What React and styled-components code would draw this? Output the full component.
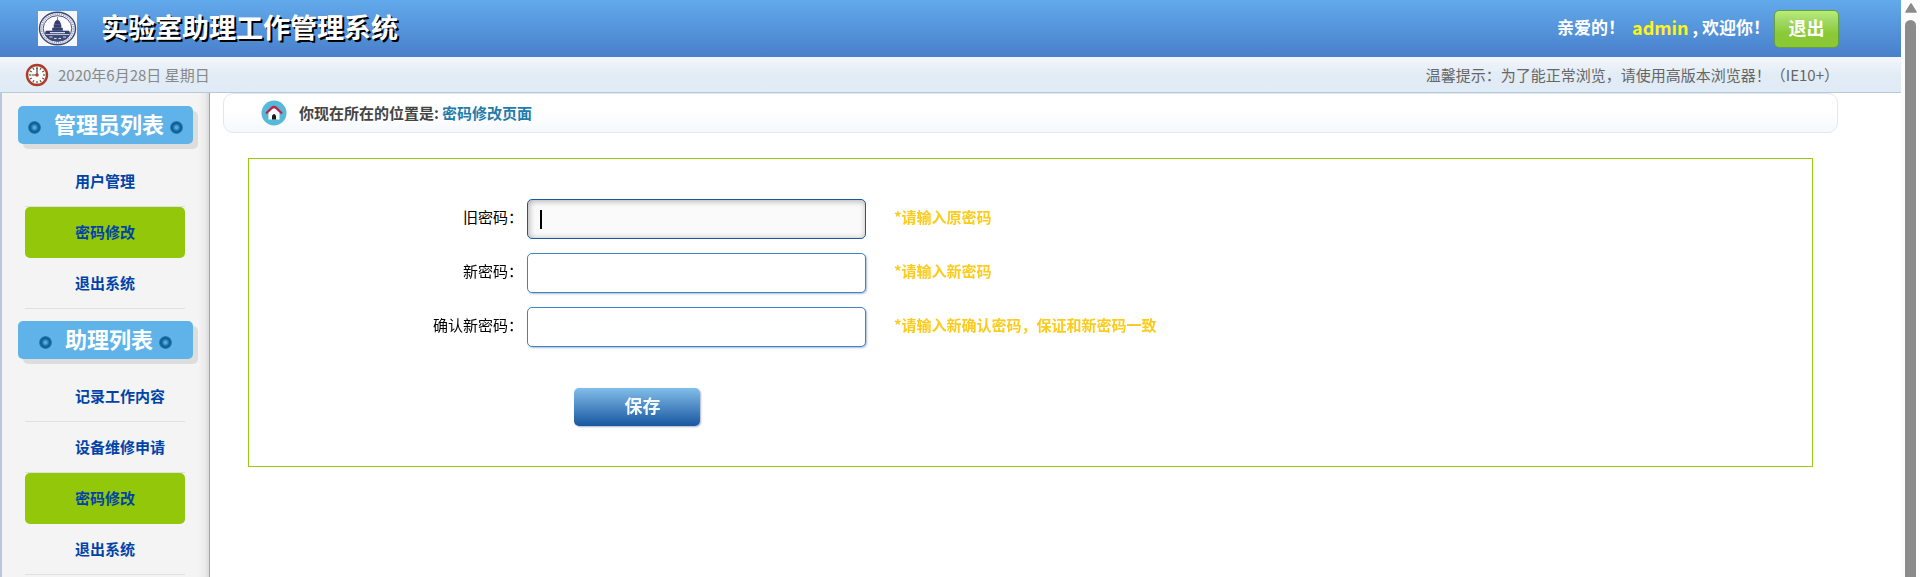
import React from 'react';
import styled, { createGlobalStyle, css } from 'styled-components';

const GlobalStyle = createGlobalStyle`
  *, *::before, *::after { box-sizing: border-box; }
  html, body, #root { height: 100%; }
  body {
    margin: 0;
    overflow: hidden;
    background: #fff;
    color: #000;
    font: 15px/22px "Noto Sans CJK SC", sans-serif;
  }
  h1, h2, ul, p { margin: 0; padding: 0; }
  ul { list-style: none; }
  a { text-decoration: none; }
  button, input { font-family: inherit; }
`;

const Shell = styled.div`
  display: flex;
  height: 100%;
`;

const Page = styled.div`
  flex: 1;
  min-width: 0;
  display: flex;
  flex-direction: column;
`;

const ScrollTrack = styled.div`
  width: 19px;
  padding: 3px 4px 0;
  background: #fcfcfc;
  display: flex;
  flex-direction: column;
  gap: 7px;
`;

const ScrollArrow = styled.svg`
  display: block;
  flex: none;
  width: 12px;
  height: 10px;
`;

const ScrollThumb = styled.div`
  flex: 1;
  width: 11px;
  background: #8b8b8b;
  border-radius: 6px 6px 0 0;
`;

const Header = styled.header`
  flex: none;
  height: 57px;
  padding: 0 62px 0 38px;
  display: flex;
  align-items: center;
  background: linear-gradient(#62aaeb, #487fca);
`;

const Logo = styled.svg`
  display: block;
  width: 39px;
  height: 35px;
`;

const SiteTitle = styled.h1`
  flex: 1;
  margin-left: 24px;
  padding-bottom: 4px;
  font-size: 27px;
  line-height: 52px;
  color: #fff;
  text-shadow: 2px 2px 0 #000;
`;

const Welcome = styled.p`
  display: flex;
  align-items: center;
  margin-right: 4px;
  padding-bottom: 3px;
  color: #fff;
  font-size: 17px;
  font-weight: bold;
`;

const UserName = styled.span`
  margin: 0 4px 0 7px;
  color: #fff31c;
  font-size: 18px;
`;

const ExitButton = styled.button`
  width: 65px;
  height: 38px;
  padding: 0 0 3px;
  border: 1px solid #62a043;
  border-radius: 5px;
  background: linear-gradient(#b8ee76, #a3da68 25%, #8ac835 65%, #8ac835);
  color: #fff;
  font-size: 18px;
  font-weight: bold;
`;

const InfoBar = styled.div`
  flex: none;
  height: 36px;
  padding: 0 62px 0 25px;
  display: flex;
  align-items: center;
  border-bottom: 1px solid #b9c9da;
  background: linear-gradient(#f4f6fd, #e2ecf5 50%, #dfebf5);
`;

const Clock = styled.svg`
  display: block;
  width: 24px;
  height: 24px;
`;

const Today = styled.time`
  flex: 1;
  margin-left: 9px;
  color: #888;
`;

const Tip = styled.p`
  color: #666;
`;

const Body = styled.div`
  flex: 1;
  min-height: 0;
  display: flex;
`;

const Sidebar = styled.nav`
  width: 210px;
  flex: none;
  overflow: hidden;
  padding: 13px 0 0;
  border-left: 2px solid #bac6dd;
  border-right: 1px solid #8fa9cc;
  background: linear-gradient(to left, #d9d9d9, #ebebeb 4px, #f4f4f4 11px);
`;

const GroupTitle = styled.h2`
  width: 175px;
  height: 38px;
  margin: 0 0 12px 16px;
  display: flex;
  align-items: center;
  justify-content: center;
  border-radius: 5px;
  background: #60b3e8;
  box-shadow: 5px 5px 0 #ddd;
  color: #fff;
  font-size: 22px;
  line-height: 34px;
  padding-bottom: 4px;
`;

const Ring = styled.span`
  width: 13px;
  height: 13px;
  margin: ${({ $end }) => ($end ? '8px 0 0 6px' : '8px 13px 0 0')};
  border-radius: 50%;
  background: radial-gradient(circle, #57ace0 0 1px, #0e6199 4px, #0e6199 5px, #3d8dc2 7px);
`;

const Menu = styled.ul`
  width: 160px;
  margin: 0 0 12px 23px;
`;

const MenuLink = styled.a`
  display: block;
  height: 51px;
  padding-left: 50px;
  border-bottom: 1px solid #e0e0e0;
  color: #0043a8;
  font-weight: bold;
  line-height: 50px;
  ${({ $active }) =>
    $active &&
    css`
      border-bottom-color: transparent;
      border-radius: 5px;
      background: #92c70a;
    `}
`;

const Main = styled.main`
  flex: 1;
  min-width: 0;
  padding: 0 63px 0 13px;
`;

const Location = styled.div`
  height: 40px;
  padding-left: 37px;
  display: flex;
  align-items: center;
  border: 1px solid #e3e6f6;
  border-radius: 10px;
  background: linear-gradient(#fff 40%, #f5f9fd);
  color: #444;
  font-weight: bold;
`;

const HomeIcon = styled.svg`
  display: block;
  width: 26px;
  height: 26px;
  margin-right: 12px;
`;

const LocationLink = styled.a`
  margin-left: 3px;
  color: #237ba9;
`;

const Panel = styled.form`
  margin: 25px 25px 0;
  padding: 40px 0 40px 83px;
  border: 1px solid #98c913;
`;

const Field = styled.div`
  display: flex;
  align-items: center;
  margin-bottom: 14px;
`;

const FieldLabel = styled.label`
  width: 195px;
  padding: 0 4px 4px 0;
  text-align: right;
`;

const FieldInput = styled.input`
  width: 339px;
  height: 40px;
  padding: 0 12px;
  border: 1px solid #4183c4;
  border-radius: 5px;
  outline: none;
  background: #fff;
  box-shadow: 1px 1px 2px #a9bdd4;
  font-size: 15px;

  &:focus {
    border-color: #1a57a5;
    background: linear-gradient(#000, #000) 12px 50% / 2px 19px no-repeat #fafafa;
    box-shadow: inset 1px 1px 6px #aaa;
    caret-color: transparent;
  }
`;

const Hint = styled.span`
  margin-left: 28px;
  padding-bottom: 4px;
  color: #fccb1c;
  font-weight: bold;
`;

const SaveButton = styled.button`
  display: block;
  width: 126px;
  height: 38px;
  margin: 41px 0 0 242px;
  padding: 0 0 5px 11px;
  border: 0;
  border-radius: 5px;
  background: linear-gradient(#82bee9, #1856a0);
  box-shadow: 1px 1px 2px #a9b4cc;
  color: #f2f9ff;
  font-size: 18px;
  font-weight: bold;
`;

const groups = [
  {
    title: '管理员列表',
    items: [{ text: '用户管理' }, { text: '密码修改', active: true }, { text: '退出系统' }],
  },
  {
    title: '助理列表',
    items: [
      { text: '记录工作内容' },
      { text: '设备维修申请' },
      { text: '密码修改', active: true },
      { text: '退出系统' },
    ],
  },
];

const fields = [
  { id: 'old-password', label: '旧密码：', hint: '*请输入原密码' },
  { id: 'new-password', label: '新密码：', hint: '*请输入新密码' },
  { id: 'confirm-password', label: '确认新密码：', hint: '*请输入新确认密码，保证和新密码一致' },
];

const ticks = Array.from({ length: 12 }, (_, i) => i * 30);

export default function App() {
  return (
    <>
      <GlobalStyle />
      <Shell>
        <Page>
          <Header>
            <Logo viewBox="0 0 39 35" aria-hidden="true">
              <rect width="39" height="35" fill="#f6f7fa" />
              <ellipse cx="19.5" cy="17.5" rx="18" ry="16.3" fill="none" stroke="#3c4774" strokeWidth="1.4" />
              <ellipse cx="19.5" cy="17.5" rx="16" ry="14.4" fill="none" stroke="#9aa1bd" strokeWidth="1.6" strokeDasharray="1.2 1" />
              <ellipse cx="19.5" cy="17.5" rx="14.3" ry="12.8" fill="#fbfbfd" stroke="#4a5482" strokeWidth="1" />
              <path d="M19.5 6v3M16.5 13q.5-3.500 3-4 2.500.5 3 4zM16 13.500h7v3h-7zM14.500 17h10v2.500h-10zM8 20h23l1 3H7z" fill="#34406f" stroke="#34406f" strokeWidth=".6" />
              <path d="M7 24h25q-3.500 6.500-12.500 6.500T7 24" fill="#3f4a78" />
              <path d="M12 21.700h15M11.500 26h3M16 27.500h2.500M20.500 27.500h2.500M25 26h3" stroke="#d3d7e5" strokeWidth="1.200" />
            </Logo>
            <SiteTitle>实验室助理工作管理系统</SiteTitle>
            <Welcome>
              亲爱的！<UserName>admin</UserName>, 欢迎你！
            </Welcome>
            <ExitButton type="button">退出</ExitButton>
          </Header>
          <InfoBar>
            <Clock viewBox="0 0 24 24" aria-hidden="true">
              <circle cx="12" cy="12" r="10" fill="#fbfbf8" stroke="#b03a2a" strokeWidth="2.400" />
              {ticks.map((angle) => (
                <path key={angle} d="M12 3.800v2.200" stroke="#555" strokeWidth="1.200" transform={`rotate(${angle} 12 12)`} />
              ))}
              <path d="M12 5v7H6.500" fill="none" stroke="#444" strokeWidth="1.200" />
              <circle cx="12" cy="12" r="1.700" fill="#c0392b" />
            </Clock>
            <Today dateTime="2020-06-28">2020年6月28日 星期日</Today>
            <Tip>温馨提示：为了能正常浏览，请使用高版本浏览器！（IE10+）</Tip>
          </InfoBar>
          <Body>
            <Sidebar>
              {groups.map((group) => (
                <React.Fragment key={group.title}>
                  <GroupTitle>
                    <Ring />
                    {group.title}
                    <Ring $end />
                  </GroupTitle>
                  <Menu>
                    {group.items.map((item) => (
                      <li key={item.text}>
                        <MenuLink href="#" $active={item.active}>{item.text}</MenuLink>
                      </li>
                    ))}
                  </Menu>
                </React.Fragment>
              ))}
            </Sidebar>
            <Main>
              <Location>
                <HomeIcon viewBox="0 0 26 26" aria-hidden="true">
                  <circle cx="13" cy="13" r="12.500" fill="#55b9d8" />
                  <path d="M7.500 12.500L13 8l5.500 4.500V19.500h-11z" fill="#fff" />
                  <path d="M5 13.500L10.500 8q2.500-2 5 0l5.500 5.500" fill="none" stroke="#c81f42" strokeWidth="2.200" />
                  <path d="M11 19.500v-4q2-3 4 0v4z" fill="#1c1c1c" />
                </HomeIcon>
                你现在所在的位置是:
                <LocationLink href="#">密码修改页面</LocationLink>
              </Location>
              <Panel>
                {fields.map((field, i) => (
                  <Field key={field.id}>
                    <FieldLabel htmlFor={field.id}>{field.label}</FieldLabel>
                    <FieldInput id={field.id} type="password" autoFocus={i === 0} />
                    <Hint>{field.hint}</Hint>
                  </Field>
                ))}
                <SaveButton type="button">保存</SaveButton>
              </Panel>
            </Main>
          </Body>
        </Page>
        <ScrollTrack>
          <ScrollArrow viewBox="0 0 12 10" aria-hidden="true">
            <path d="M6 1l5 8H1z" fill="#8b8b8b" stroke="#8b8b8b" strokeWidth="1.500" strokeLinejoin="round" />
          </ScrollArrow>
          <ScrollThumb />
        </ScrollTrack>
      </Shell>
    </>
  );
}
